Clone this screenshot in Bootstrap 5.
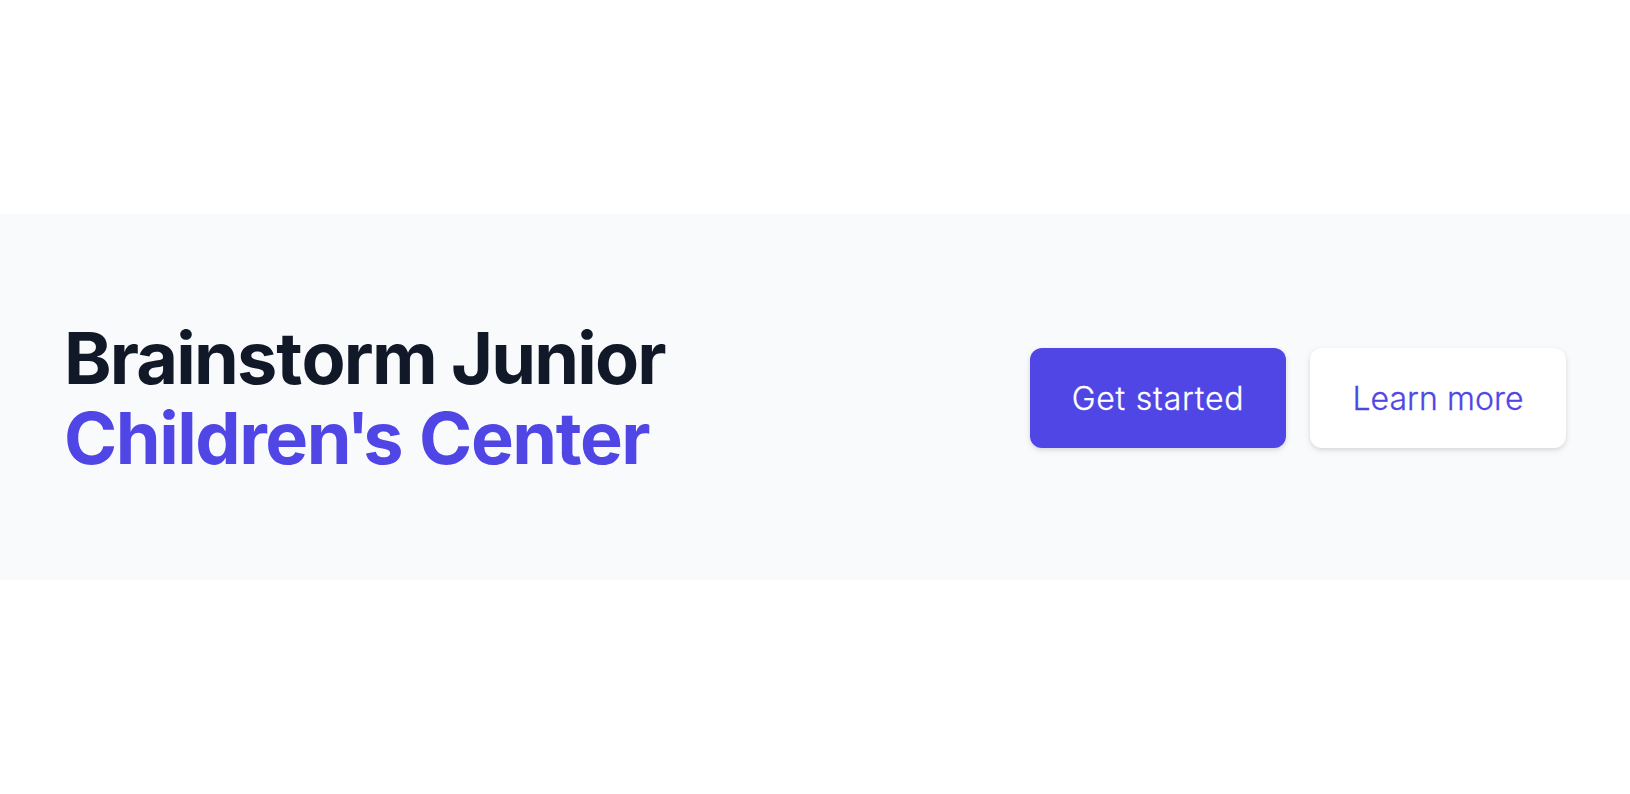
<!DOCTYPE html>
<html lang="en">
<head>
<meta charset="utf-8">
<meta name="viewport" content="width=device-width, initial-scale=1">
<title>Brainstorm Junior Children's Center</title>
<link href="https://cdn.jsdelivr.net/npm/bootstrap@5.3.0/dist/css/bootstrap.min.css" rel="stylesheet">
<style>
body{font-family:Inter,sans-serif;background:#fff}
.cta-band{background:#f9fafc;height:366px;padding:2px 64px 0}
.cta-title{font-size:72px;line-height:80px;font-weight:700;letter-spacing:-1.82px;word-spacing:0;color:#111827}
.cta-title .cta-pair{letter-spacing:-1.1px}
.cta-accent{color:#4f46e5;letter-spacing:-1.45px;word-spacing:1.3px}
.cta-tight{letter-spacing:-5.3px}
.cta-apos{letter-spacing:-6.5px;font-weight:600}
.cta-btn{width:256px;height:100px;padding-top:8px;border:0;border-radius:12px;font-size:32px;line-height:48px;font-weight:300;-webkit-text-stroke:.3px currentColor;box-shadow:0 2px 6px rgba(0,0,0,.1),0 2px 4px rgba(0,0,0,.05)}
.cta-primary,.cta-primary:hover{background:#4f46e5;color:#fff;letter-spacing:.8px}
.cta-secondary,.cta-secondary:hover{background:#fff;color:#4f46e5;letter-spacing:.05px}
</style>
</head>
<body class="min-vh-100 d-flex flex-column justify-content-center">
<section class="cta-band d-flex align-items-center justify-content-between">
<h2 class="cta-title m-0"><span class="d-block">Brain<span class="cta-pair">st</span>orm Junior</span><span class="cta-accent d-block">Childre<span class="cta-tight">n</span><span class="cta-apos">'</span>s Center</span></h2>
<div class="d-flex gap-4">
<a href="#" class="btn cta-btn cta-primary d-flex align-items-center justify-content-center">Get started</a>
<a href="#" class="btn cta-btn cta-secondary d-flex align-items-center justify-content-center">Learn more</a>
</div>
</section>
<script src="https://cdn.jsdelivr.net/npm/bootstrap@5.3.0/dist/js/bootstrap.bundle.min.js"></script>
</body>
</html>
